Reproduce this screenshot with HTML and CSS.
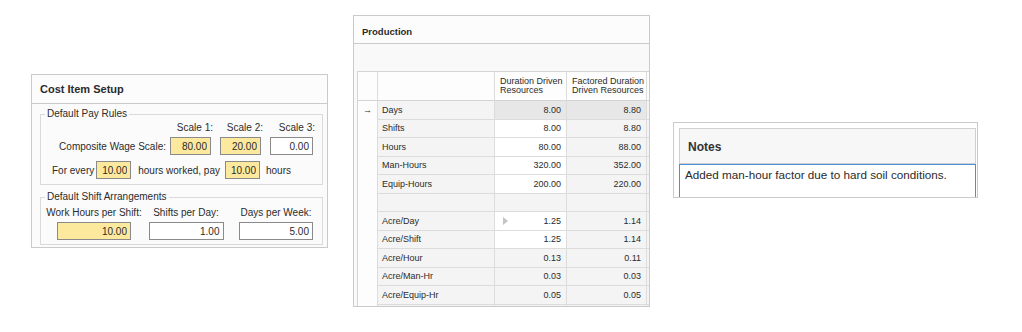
FILE: index.html
```html
<!DOCTYPE html>
<html lang="en">
<head>
    <meta charset="UTF-8">
    <meta name="viewport" content="width=device-width, initial-scale=1.0">
    <title>Cost Item Production</title>
    <link rel="stylesheet" href="styles.css">
</head>
<body>
    <div class="canvas">
        <section class="panel setup">
            <div class="panel-title">Cost Item Setup</div>
            <fieldset class="group">
                <legend>Default Pay Rules</legend>
                <div class="scale-grid">
                    <span></span>
                    <span class="col-label">Scale 1:</span>
                    <span class="col-label">Scale 2:</span>
                    <span class="col-label">Scale 3:</span>
                    <span class="row-label">Composite Wage Scale:</span>
                    <input class="field required" value="80.00" readonly>
                    <input class="field required" value="20.00" readonly>
                    <input class="field wide" value="0.00" readonly>
                </div>
                <div class="ratio-row">
                    <span>For every</span>
                    <input class="field required short" value="10.00" readonly>
                    <span class="mid-text">hours worked, pay</span>
                    <input class="field required short" value="10.00" readonly>
                    <span class="end-text">hours</span>
                </div>
            </fieldset>
            <fieldset class="group shifts">
                <legend>Default Shift Arrangements</legend>
                <div class="shift-grid">
                    <span>Work Hours per Shift:</span>
                    <span>Shifts per Day:</span>
                    <span>Days per Week:</span>
                    <input class="field required" value="10.00" readonly>
                    <input class="field mid" value="1.00" readonly>
                    <input class="field" value="5.00" readonly>
                </div>
            </fieldset>
        </section>

        <section class="panel production">
            <div class="panel-title">Production</div>
            <div class="grid">
                <div class="cell head"></div>
                <div class="cell head"></div>
                <div class="cell head">Duration Driven<br>Resources</div>
                <div class="cell head">Factored Duration<br>Driven Resources</div>
                <div class="cell head"></div>

                <div class="cell ind">&rarr;</div>
                <div class="cell label">Days</div>
                <div class="cell num sel">8.00</div>
                <div class="cell num sel">8.80</div>
                <div class="cell"></div>

                <div class="cell ind"></div>
                <div class="cell label">Shifts</div>
                <div class="cell num edit">8.00</div>
                <div class="cell num">8.80</div>
                <div class="cell"></div>

                <div class="cell ind"></div>
                <div class="cell label">Hours</div>
                <div class="cell num edit">80.00</div>
                <div class="cell num">88.00</div>
                <div class="cell"></div>

                <div class="cell ind"></div>
                <div class="cell label">Man-Hours</div>
                <div class="cell num edit">320.00</div>
                <div class="cell num">352.00</div>
                <div class="cell"></div>

                <div class="cell ind"></div>
                <div class="cell label">Equip-Hours</div>
                <div class="cell num edit">200.00</div>
                <div class="cell num">220.00</div>
                <div class="cell"></div>

                <div class="cell ind"></div>
                <div class="cell label"></div>
                <div class="cell num"></div>
                <div class="cell num"></div>
                <div class="cell"></div>

                <div class="cell ind"></div>
                <div class="cell label">Acre/Day</div>
                <div class="cell num edit split"><span class="caret"></span>1.25</div>
                <div class="cell num">1.14</div>
                <div class="cell"></div>

                <div class="cell ind"></div>
                <div class="cell label">Acre/Shift</div>
                <div class="cell num edit">1.25</div>
                <div class="cell num">1.14</div>
                <div class="cell"></div>

                <div class="cell ind"></div>
                <div class="cell label">Acre/Hour</div>
                <div class="cell num">0.13</div>
                <div class="cell num">0.11</div>
                <div class="cell"></div>

                <div class="cell ind"></div>
                <div class="cell label">Acre/Man-Hr</div>
                <div class="cell num">0.03</div>
                <div class="cell num">0.03</div>
                <div class="cell"></div>

                <div class="cell ind"></div>
                <div class="cell label">Acre/Equip-Hr</div>
                <div class="cell num">0.05</div>
                <div class="cell num">0.05</div>
                <div class="cell"></div>

                <div class="cell ind"></div>
                <div class="cell label"></div>
                <div class="cell num"></div>
                <div class="cell num"></div>
                <div class="cell"></div>
            </div>
        </section>

        <section class="panel notes">
            <div class="notes-title">Notes</div>
            <div class="notes-body">Added man-hour factor due to hard soil conditions.</div>
        </section>
    </div>
</body>
</html>
```

FILE: styles.css
```css
body {
    margin: 0;
    background: #fff;
    font-family: "Liberation Sans", Arial, sans-serif;
    color: #2b2b2b;
}

.canvas {
    display: flex;
    align-items: flex-start;
    padding-left: 31px;
}

.panel {
    box-sizing: border-box;
    border: 1px solid #cacaca;
    background: #fff;
}

.panel-title {
    font-weight: bold;
    border-bottom: 1px solid #cacaca;
    background: #fcfcfc;
    padding-left: 8px;
}

/* Cost Item Setup */
.setup {
    width: 297px;
    margin-top: 74px;
    padding-bottom: 2px;
    font-size: 10px;
    white-space: nowrap;
    background: #fbfbfb;
}

.setup .panel-title {
    height: 28px;
    line-height: 28px;
    font-size: 11px;
}

.group {
    margin: 3px 4px 0 8px;
    padding: 0 0 5px;
    border: 1px solid #dadada;
    min-width: 0;
}

.group legend {
    margin-left: 4px;
    padding: 0 2px;
    line-height: 14px;
}

.group.shifts {
    margin-top: 5px;
    padding-bottom: 4px;
}

.field {
    box-sizing: border-box;
    width: 41px;
    height: 18px;
    margin: 0;
    padding: 0 3px;
    border: 1px solid #8a8a8a;
    background: #fff;
    font: inherit;
    color: #2b2b2b;
    text-align: right;
    outline: none;
}

.field.required {
    background: #fde99d;
}

.scale-grid {
    display: grid;
    grid-template-columns: 1fr 45px 50px 52px;
    grid-template-rows: 14px 18px;
    row-gap: 2px;
    align-items: center;
    padding-right: 9px;
}

.scale-grid .col-label {
    text-align: right;
    line-height: 14px;
    margin-right: -2px;
}

.scale-grid .row-label {
    text-align: right;
}

.scale-grid .field {
    justify-self: end;
}

.scale-grid .field.wide {
    width: 43px;
}

.ratio-row {
    display: flex;
    align-items: center;
    margin-top: 6px;
    padding-left: 11px;
}

.ratio-row .field.short {
    width: 35px;
    margin-left: 2px;
}

.ratio-row .mid-text {
    margin: 0 3px 0 7px;
}

.ratio-row .end-text {
    margin-left: 6px;
}

.shift-grid {
    display: grid;
    grid-template-columns: 94px 90px 90px;
    grid-template-rows: 14px 18px;
    row-gap: 2px;
    justify-items: center;
    padding: 2px 0 0 6px;
    line-height: 14px;
}

.shift-grid .field {
    width: 74px;
}

.shift-grid .field.mid {
    width: 75px;
}

/* Production grid */
.production {
    width: 297px;
    height: 292px;
    margin: 15px 0 0 25px;
    overflow: hidden;
    background: #f9f9f9;
}

.production .panel-title {
    height: 23px;
    padding-top: 4px;
    line-height: 23px;
    font-size: 9.5px;
}

.grid {
    display: grid;
    grid-template-columns: 20px 117px 72px 80px 20px;
    grid-template-rows: 29px;
    grid-auto-rows: 18.5px;
    margin: 27px 0 0 3px;
    border-top: 1px solid #d4d4d4;
    border-left: 1px solid #d4d4d4;
    font-size: 9px;
    color: #2b2b2b;
}

.cell {
    box-sizing: border-box;
    display: flex;
    align-items: center;
    padding: 0 5px;
    border-right: 1px solid #dcdcdc;
    border-bottom: 1px solid #dcdcdc;
    background: #f4f4f4;
    white-space: nowrap;
}

.cell.head {
    background: #fdfdfd;
    line-height: 9.5px;
    border-bottom-color: #d4d4d4;
}

.cell.ind {
    justify-content: center;
    padding: 0;
    border-bottom: none;
    background: #fdfdfd;
    font-size: 9px;
}

.cell.label {
    padding-left: 4px;
}

.cell.num {
    justify-content: flex-end;
}

.cell.edit {
    background: #fff;
}

.cell.sel {
    background: #e7e7e7;
}

.cell.split {
    justify-content: space-between;
}

.caret {
    margin-left: 3px;
    border-left: 5px solid #c4c4c4;
    border-top: 4px solid transparent;
    border-bottom: 4px solid transparent;
}

/* Notes */
.notes {
    display: flex;
    flex-direction: column;
    width: 305px;
    height: 76px;
    margin: 122px 0 0 23px;
    padding: 5px 1px 0 5px;
}

.notes-title {
    box-sizing: border-box;
    height: 36px;
    padding: 2px 0 0 8px;
    line-height: 32px;
    border: 1px solid #d0d0d0;
    background: #f7f7f7;
    font-size: 12px;
    font-weight: bold;
    color: #333;
}

.notes-body {
    flex: 1;
    padding: 3px 5px 0;
    border: 1px solid #4a8fd8;
    border-bottom: none;
    font-size: 11.7px;
    line-height: 14px;
}
```
